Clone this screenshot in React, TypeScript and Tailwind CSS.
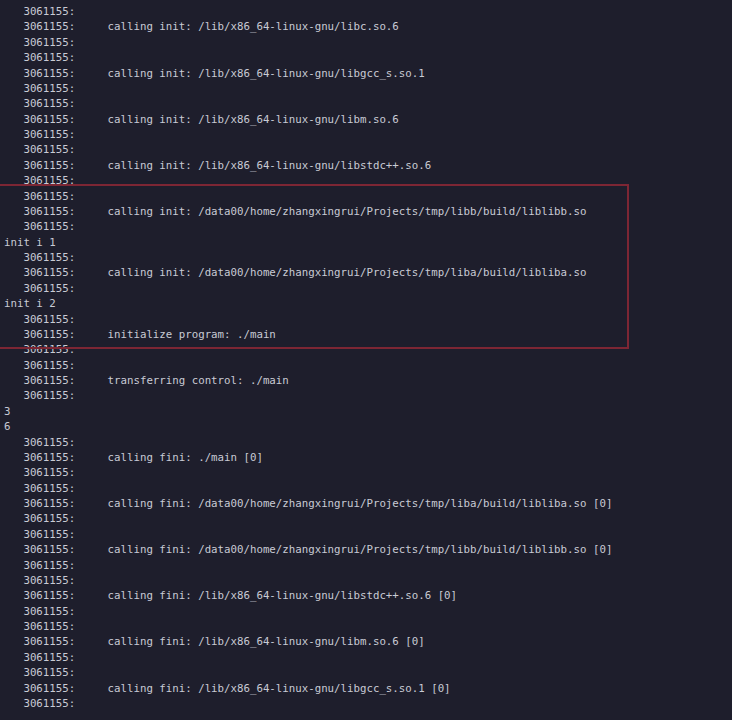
import React from "react";

const P = "   3061155:";
const C = "   3061155:     ";

const lines: string[] = [
  P,
  C + "calling init: /lib/x86_64-linux-gnu/libc.so.6",
  P,
  P,
  C + "calling init: /lib/x86_64-linux-gnu/libgcc_s.so.1",
  P,
  P,
  C + "calling init: /lib/x86_64-linux-gnu/libm.so.6",
  P,
  P,
  C + "calling init: /lib/x86_64-linux-gnu/libstdc++.so.6",
  P,
  P,
  C + "calling init: /data00/home/zhangxingrui/Projects/tmp/libb/build/liblibb.so",
  P,
  "init i 1",
  P,
  C + "calling init: /data00/home/zhangxingrui/Projects/tmp/liba/build/libliba.so",
  P,
  "init i 2",
  P,
  C + "initialize program: ./main",
  P,
  P,
  C + "transferring control: ./main",
  P,
  "3",
  "6",
  P,
  C + "calling fini: ./main [0]",
  P,
  P,
  C + "calling fini: /data00/home/zhangxingrui/Projects/tmp/liba/build/libliba.so [0]",
  P,
  P,
  C + "calling fini: /data00/home/zhangxingrui/Projects/tmp/libb/build/liblibb.so [0]",
  P,
  P,
  C + "calling fini: /lib/x86_64-linux-gnu/libstdc++.so.6 [0]",
  P,
  P,
  C + "calling fini: /lib/x86_64-linux-gnu/libm.so.6 [0]",
  P,
  P,
  C + "calling fini: /lib/x86_64-linux-gnu/libgcc_s.so.1 [0]",
  P,
];

export default function App() {
  return (
    <div className="relative w-[732px] h-[720px] overflow-hidden bg-[#1e1e2c]">
      <div
        className="pl-[4px] pt-[4px] text-[#c9cbd5] text-[10.76px] leading-[15.38px] whitespace-pre"
        style={{ fontFamily: '"DejaVu Sans Mono", "Liberation Mono", monospace' }}
      >
        {lines.map((l, i) => (
          <div key={i}>{l}</div>
        ))}
      </div>
      <div className="absolute left-[-4px] top-[184px] w-[633px] h-[165px] border-2 border-[#7d2634]" />
    </div>
  );
}
